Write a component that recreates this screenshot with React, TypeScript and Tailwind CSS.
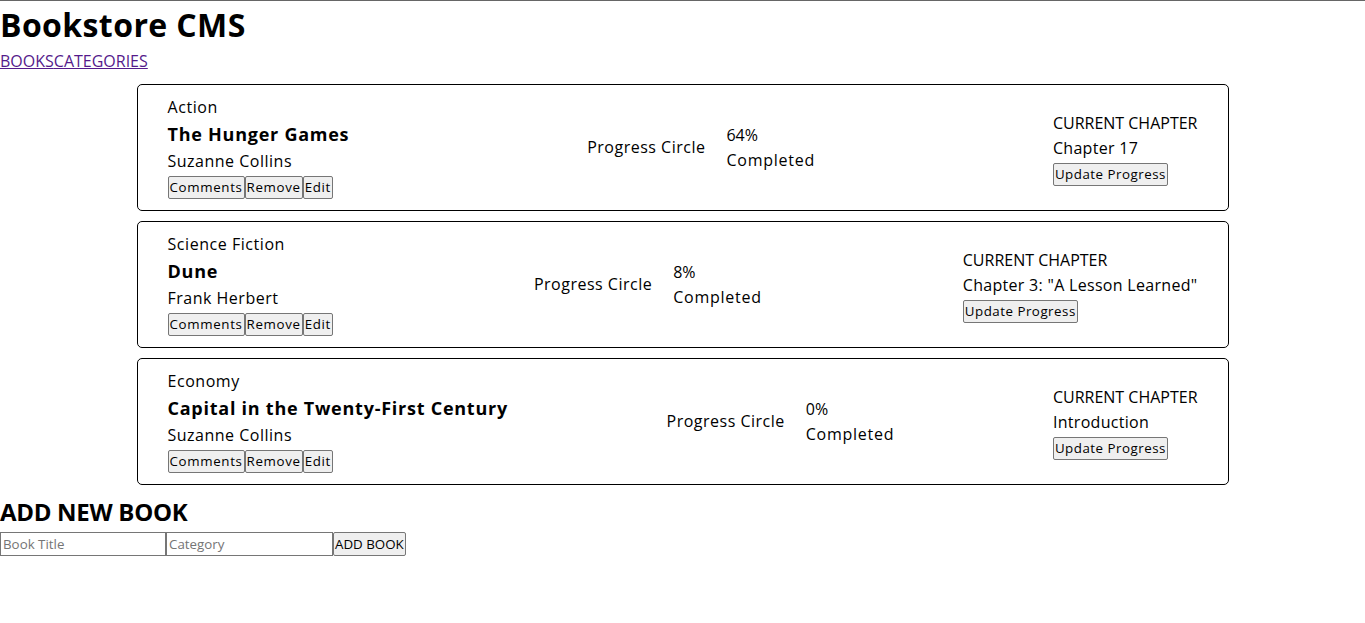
import React from "react";

type Book = {
  id: number;
  category: string;
  title: string;
  author: string;
  progress: number;
  chapter: string;
};

const books: Book[] = [
  { id: 1, category: "Action", title: "The Hunger Games", author: "Suzanne Collins", progress: 64, chapter: "Chapter 17" },
  { id: 2, category: "Science Fiction", title: "Dune", author: "Frank Herbert", progress: 8, chapter: 'Chapter 3: "A Lesson Learned"' },
  { id: 3, category: "Economy", title: "Capital in the Twenty-First Century", author: "Suzanne Collins", progress: 0, chapter: "Introduction" },
];

const btn =
  "bg-[#efefef] border border-[#767676] rounded-[2px] px-[1px] h-[23px] text-[13.33px] leading-[21px] text-black";

const BookCard = ({ book }: { book: Book }) => (
  <div className="flex items-center justify-between border border-black rounded-[5px] px-[30px] pt-[10px] pb-[11px] mb-[10px]">
    <div className="flex flex-col">
      <p className="text-[16px] leading-[24px] tracking-[0.55px]">{book.category}</p>
      <h3 className="text-[18px] leading-[30px] font-bold tracking-[0.75px]">{book.title}</h3>
      <p className="text-[16px] leading-[24px] tracking-[0.5px]">{book.author}</p>
      <div className="flex mt-[3px]">
        <button className={btn + " tracking-[0.65px]"}>Comments</button>
        <button className={btn + " tracking-[0.65px]"}>Remove</button>
        <button className={btn + " tracking-[0.65px]"}>Edit</button>
      </div>
    </div>
    <div className="flex items-center gap-[21px]">
      <p className="text-[16px] leading-[24px] tracking-[0.5px]">Progress Circle</p>
      <div className="flex flex-col gap-[1px]">
        <p className="text-[16px] leading-[24px]">{book.progress}%</p>
        <p className="text-[16px] leading-[24px] tracking-[0.75px]">Completed</p>
      </div>
    </div>
    <div className="flex flex-col items-start pt-[2px]">
      <p className="text-[16px] leading-[24px] uppercase">Current Chapter</p>
      <p className="text-[16px] leading-[24px] mt-[1px] tracking-[0.3px]">{book.chapter}</p>
      <button className={btn + " mt-[3px] tracking-[0.5px]"}>Update Progress</button>
    </div>
  </div>
);

export default function App() {
  return (
    <div className="min-h-[623px] border-t border-[#666] bg-white text-black font-['Open_Sans',sans-serif]">
      <h1 className="text-[32px] leading-[48px] font-bold tracking-[0.4px]">Bookstore CMS</h1>
      <nav className="flex text-[16px] leading-[24px]">
        <a href="#" className="text-[#551a8b] underline">BOOKS</a>
        <a href="#" className="text-[#551a8b] underline">CATEGORIES</a>
      </nav>
      <main className="w-4/5 mx-auto mt-[11px]">
        {books.map((b) => (
          <BookCard key={b.id} book={b} />
        ))}
      </main>
      <h2 className="text-[24px] leading-[36px] font-bold mt-[-1px] tracking-[-0.3px]">ADD NEW BOOK</h2>
      <form className="flex mt-[2px]" onSubmit={(e) => e.preventDefault()}>
        <input
          placeholder="Book Title"
          className="w-[166px] h-[24px] border border-[#767676] px-[2px] text-[13.33px] placeholder:text-[#757575]"
        />
        <input
          placeholder="Category"
          className="w-[167px] h-[24px] border border-[#767676] px-[2px] text-[13.33px] placeholder:text-[#757575]"
        />
        <button type="submit" className={btn + " h-[24px]"}>ADD BOOK</button>
      </form>
    </div>
  );
}
